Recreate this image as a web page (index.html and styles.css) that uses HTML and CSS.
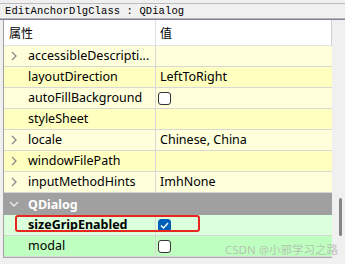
FILE: index.html
```html
<!DOCTYPE html>
<html lang="zh">
  <head>
    <meta charset="UTF-8" />
    <title>Property Editor</title>
    <link rel="stylesheet" href="styles.css">
  </head>
  <body>
    <div class="window">
      <div class="titlebar">EditAnchorDlgClass : QDialog</div>

      <div class="editor">
        <div class="tree">
          <div class="header">
            <div class="head-name">属性</div>
            <div class="head-value">值</div>
          </div>

          <div class="row yellow-light">
            <div class="name">
              <span class="branch"><svg width="6" height="10" viewBox="0 0 6 10"><polyline points="1,1 5,5 1,9" /></svg></span>
              <span class="label">accessibleDescripti...</span>
            </div>
            <div class="value"></div>
          </div>
          <div class="row yellow">
            <div class="name"><span class="branch"></span><span class="label">layoutDirection</span></div>
            <div class="value">LeftToRight</div>
          </div>
          <div class="row yellow-light">
            <div class="name"><span class="branch"></span><span class="label">autoFillBackground</span></div>
            <div class="value"><span class="check"></span></div>
          </div>
          <div class="row yellow">
            <div class="name"><span class="branch"></span><span class="label">styleSheet</span></div>
            <div class="value"></div>
          </div>
          <div class="row yellow-light">
            <div class="name">
              <span class="branch"><svg width="6" height="10" viewBox="0 0 6 10"><polyline points="1,1 5,5 1,9" /></svg></span>
              <span class="label">locale</span>
            </div>
            <div class="value">Chinese, China</div>
          </div>
          <div class="row yellow">
            <div class="name">
              <span class="branch"><svg width="6" height="10" viewBox="0 0 6 10"><polyline points="1,1 5,5 1,9" /></svg></span>
              <span class="label">windowFilePath</span>
            </div>
            <div class="value"></div>
          </div>
          <div class="row yellow-light">
            <div class="name">
              <span class="branch"><svg width="6" height="10" viewBox="0 0 6 10"><polyline points="1,1 5,5 1,9" /></svg></span>
              <span class="label">inputMethodHints</span>
            </div>
            <div class="value">ImhNone</div>
          </div>

          <div class="group">
            <span class="branch"><svg width="10" height="6" viewBox="0 0 10 6"><polyline points="1,1 5,5 9,1" /></svg></span>
            <span class="label">QDialog</span>
          </div>

          <div class="row green-light">
            <div class="name"><span class="branch"></span><span class="label changed">sizeGripEnabled</span></div>
            <div class="value"><span class="check checked"><svg width="9" height="7" viewBox="0 0 9 7"><polyline points="1,3.5 3.5,6 8,1" /></svg></span></div>
          </div>
          <div class="row green">
            <div class="name"><span class="branch"></span><span class="label">modal</span></div>
            <div class="value"><span class="check"></span></div>
          </div>
        </div>

        <div class="scrollbar"><div class="thumb"></div></div>
      </div>

      <!-- annotation drawn over the screenshot -->
      <div class="highlight"></div>
      <div class="watermark">CSDN @小邪学习之路</div>
    </div>
  </body>
</html>
```

FILE: styles.css
```css
/* Global Styles */
* {
  margin: 0;
  padding: 0;
  box-sizing: border-box;
}

body {
  background-color: #f0f0f0;
  color: #000;
  font-family: "Noto Sans", "Noto Sans CJK SC", sans-serif;
  font-size: 12.5px;
}

.window {
  position: relative;
  width: 345px;
  height: 264px;
  overflow: hidden;
}

/* Title */
.titlebar {
  margin-top: 3px;
  height: 16px;
  padding-left: 5px;
  border-top: 1px solid #bcbcbc;
  border-bottom: 1px solid #b4b4b4;
  font-family: "Liberation Mono", monospace;
  font-size: 10.5px;
  letter-spacing: 0.1px;
  line-height: 14px;
}

/* Property tree */
.editor {
  display: flex;
  border-top: 1px solid #7d8894;
}

.tree {
  flex: 1;
  margin-left: 3px;
  border-left: 1px solid #a0a0a0;
  border-bottom: 1px solid #a8a8a8;
  background-color: #fff;
}

.header {
  display: grid;
  grid-template-columns: 152px 1fr;
  height: 26px;
  border-bottom: 1px solid #e3e3e3;
  border-right: 1px solid #d0d0d0;
  font-family: "Noto Sans CJK SC", sans-serif;
  font-size: 12px;
  line-height: 25px;
}

.head-name {
  padding-left: 5px;
  border-right: 1px solid #e0e0e0;
}

.head-value {
  padding-left: 4px;
}

.row {
  display: grid;
  grid-template-columns: 152px 1fr;
  height: 21px;
  border-bottom: 1px solid #d7d7d7;
  line-height: 20px;
}

.yellow { background-color: #ffffbf; }
.yellow-light { background-color: #ffffdc; }
.green { background-color: #bfffbf; }
.green-light { background-color: #dcffdc; }

.name {
  display: flex;
  align-items: center;
  border-right: 1px solid #d7d7d7;
  white-space: nowrap;
  overflow: hidden;
}

.branch {
  display: flex;
  align-items: center;
  justify-content: center;
  width: 19px;
  height: 20px;
  flex-shrink: 0;
}

.branch svg {
  fill: none;
  stroke: #8a8a8a;
  stroke-width: 1.3;
}

.label {
  padding-left: 5px;
}

.label.changed {
  font-weight: 700;
}

.value {
  display: flex;
  align-items: center;
  padding-left: 4px;
  white-space: nowrap;
}

.check {
  display: inline-flex;
  align-items: center;
  justify-content: center;
  width: 13px;
  height: 13px;
  margin-left: -2px;
  border: 1px solid #333;
  border-radius: 3px;
  background-color: #fff;
}

.check.checked {
  background-color: #005fb8;
  border-color: #005fb8;
}

.check svg {
  fill: none;
  stroke: #fff;
  stroke-width: 1.4;
}

.group {
  display: flex;
  align-items: center;
  height: 22px;
  background-color: #a0a0a0;
  color: #fff;
  font-weight: 700;
}

.group .branch svg {
  stroke: #ececec;
}

.scrollbar {
  position: relative;
  width: 13px;
  background-color: #f0f0f0;
}

.thumb {
  position: absolute;
  top: 178px;
  left: 7px;
  width: 3px;
  height: 38px;
  border-radius: 2px;
  background-color: #858585;
}

/* Overlays */
.highlight {
  position: absolute;
  left: 15px;
  top: 215px;
  width: 185px;
  height: 17px;
  border: 2px solid #e8261f;
  border-radius: 3px;
}

.watermark {
  position: absolute;
  right: 7px;
  top: 241px;
  font-size: 11.5px;
  color: rgba(175, 175, 175, 0.75);
}
```
